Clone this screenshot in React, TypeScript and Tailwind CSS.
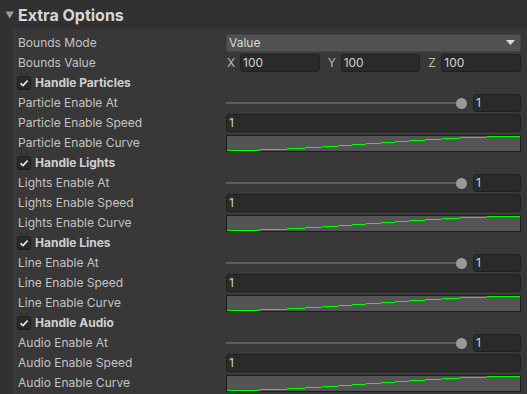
import React from "react";

const font = { fontFamily: "Inter, 'Noto Sans', sans-serif" };

const steps: [number, number, number][] = [
  [0, 33, 15],
  [33, 60, 14],
  [60, 79, 13],
  [79, 96, 12],
  [96, 112, 11],
  [112, 126, 10],
  [126, 140, 9],
  [140, 155, 8],
  [155, 169, 7],
  [169, 183, 6],
  [183, 199, 5],
  [199, 216, 4],
  [216, 235, 3],
  [235, 262, 2],
  [262, 295, 1],
];

function Curve() {
  return (
    <div className="h-[17px] flex-1 border border-[#1f1f1f] bg-[#545454] relative">
      <svg className="absolute inset-0" width="100%" height="100%" viewBox="0 0 295 15" preserveAspectRatio="none" shapeRendering="crispEdges">
        {steps.map(([a, b, y], i) => (
          <rect key={i} x={a} y={y - 1} width={b - a} height={1} fill="#00ff00" />
        ))}
      </svg>
    </div>
  );
}

function Field({ value, className = "" }: { value: string; className?: string }) {
  return (
    <div className={`h-[18px] rounded-[3px] border border-[#202020] bg-[#2a2a2a] text-[#d2d2d2] text-[12px] flex items-center pl-[2px] ${className}`}>
      {value}
    </div>
  );
}

function Row({ label, children }: { label: React.ReactNode; children?: React.ReactNode }) {
  return (
    <div className="h-[20px] flex items-center">
      <div className="w-[208px] shrink-0 text-[12px] text-[#c4c4c4]">{label}</div>
      <div className="flex-1 flex items-center">{children}</div>
    </div>
  );
}

function Toggle({ label }: { label: string }) {
  return (
    <div className="h-[20px] flex items-center">
      <div className="w-[14px] h-[14px] -ml-[1px] rounded-[3px] border border-[#1c1c1c] bg-[#2b2b2b] flex items-center justify-center">
        <svg width="10" height="10" viewBox="0 0 10 10">
          <path d="M1.5 5.2 L4 7.6 L8.6 2.4" stroke="#f0f0f0" strokeWidth="1.5" fill="none" />
        </svg>
      </div>
      <span className="ml-[4px] text-[12px] font-bold text-[#d0d0d0]">{label}</span>
    </div>
  );
}

function Slider() {
  return (
    <div className="flex-1 flex items-center">
      <div className="flex-1 flex items-center">
        <div className="flex-1 h-[2px] bg-[#5e5e5e]" />
        <div className="w-[11px] h-[11px] rounded-full bg-[#999999] -ml-[1px]" />
      </div>
      <Field value="1" className="w-[48px] ml-[6px]" />
    </div>
  );
}

function Group({ name, prefix }: { name: string; prefix: string }) {
  return (
    <>
      <Toggle label={`Handle ${name}`} />
      <Row label={`${prefix} Enable At`}>
        <Slider />
      </Row>
      <Row label={`${prefix} Enable Speed`}>
        <Field value="1" className="flex-1" />
      </Row>
      <Row label={`${prefix} Enable Curve`}>
        <Curve />
      </Row>
    </>
  );
}

export default function App() {
  return (
    <div className="w-[527px] h-[394px] bg-[#313131] overflow-hidden" style={font}>
      <div className="h-[29px] flex items-center">
        <svg width="10" height="8" viewBox="0 0 10 8" className="ml-[5px] mt-[1px]">
          <path d="M0.5 0.5 L9 0.5 L4.75 7.5 Z" fill="#9a9a9a" />
        </svg>
        <span className="ml-[3px] text-[16px] font-bold text-[#d6d6d6]">Extra Options</span>
      </div>
      <div className="flex h-[365px]">
        <div className="w-[13px] shrink-0" />
        <div className="flex-1 bg-[#383838] pt-[4px] pl-[5px] pr-[6px]">
          <Row label="Bounds Mode">
            <div className="flex-1 h-[18px] rounded-[3px] bg-[#515151] border border-[#464646] flex items-center justify-between pl-[2px] pr-[5px] text-[12px] text-[#dadada]">
              <span>Value</span>
              <svg width="9" height="6" viewBox="0 0 9 6">
                <path d="M0 0 L9 0 L4.5 5 Z" fill="#dcdcdc" />
              </svg>
            </div>
          </Row>
          <Row label="Bounds Value">
            <div className="flex-1 flex items-center gap-[7px] text-[12px] text-[#b8b8b8]">
              <div className="flex-1 flex items-center">
                <span className="w-[14px] pl-[1px]">X</span>
                <Field value="100" className="flex-1" />
              </div>
              <div className="flex-1 flex items-center">
                <span className="w-[14px] pl-[1px]">Y</span>
                <Field value="100" className="flex-1" />
              </div>
              <div className="flex-1 flex items-center">
                <span className="w-[14px] pl-[1px]">Z</span>
                <Field value="100" className="flex-1" />
              </div>
            </div>
          </Row>
          <Group name="Particles" prefix="Particle" />
          <Group name="Lights" prefix="Lights" />
          <Group name="Lines" prefix="Line" />
          <Group name="Audio" prefix="Audio" />
        </div>
      </div>
    </div>
  );
}
